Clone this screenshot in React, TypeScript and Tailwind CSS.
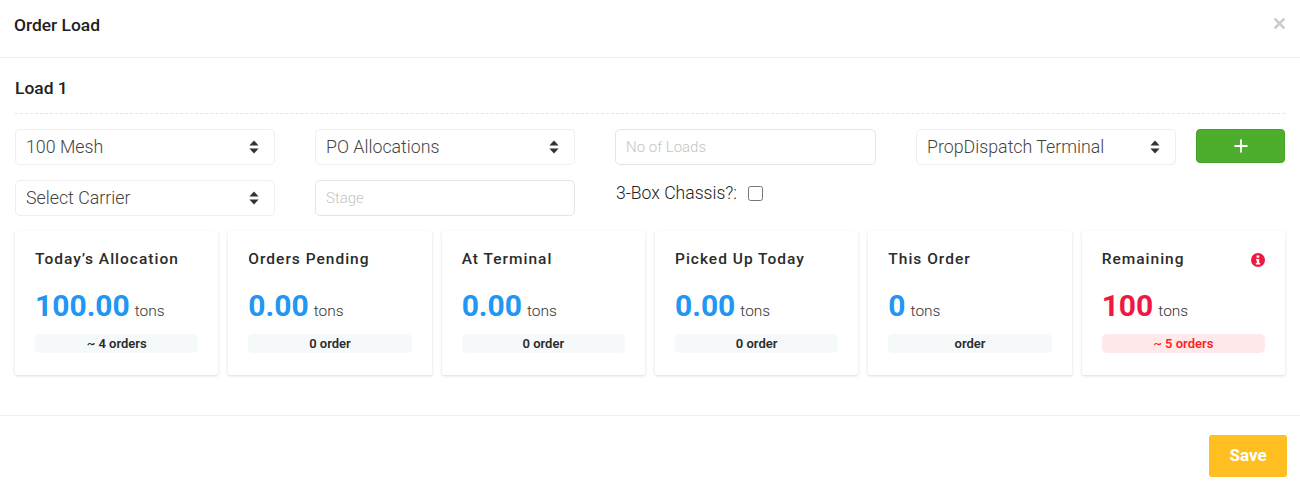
import React from 'react';

const stats = [
  { title: "Today’s Allocation", value: '100.00', note: '~ 4 orders' },
  { title: 'Orders Pending', value: '0.00', note: '0 order' },
  { title: 'At Terminal', value: '0.00', note: '0 order' },
  { title: 'Picked Up Today', value: '0.00', note: '0 order' },
  { title: 'This Order', value: '0', note: 'order' },
  { title: 'Remaining', value: '100', note: '~ 5 orders', danger: true },
];

const SelectBox = ({ value, className }: { value: string; className: string }) => (
  <div className={`relative h-[36px] ${className}`}>
    <select
      defaultValue={value}
      className="w-full h-full appearance-none bg-white border border-[#eeeeee] rounded-[5px] pl-[10px] pr-8 text-[17.8px] font-light text-[#444444] outline-none"
    >
      <option>{value}</option>
    </select>
    <svg viewBox="0 0 10 14" className="absolute right-[16px] top-[11px] w-[10px] h-[14px] fill-[#333333]">
      <path d="M5 0.5 L9.6 5.6 H0.4 Z" />
      <path d="M5 13.5 L0.4 8.4 H9.6 Z" />
    </svg>
  </div>
);

const TextBox = ({ placeholder, className }: { placeholder: string; className: string }) => (
  <input
    placeholder={placeholder}
    className={`h-[36px] bg-white border border-[#e4e4e4] rounded-[5px] px-[10px] text-[15px] font-light outline-none placeholder:text-[#c4c4c4] ${className}`}
  />
);

const App: React.FC = () => {
  return (
    <div className="w-[1300px] h-[487px] bg-white overflow-hidden font-['Roboto',sans-serif] text-[#212121]">
      {/* Header */}
      <header className="h-[58px] border-b border-[#eeeeee] pl-[14px] pr-[14px] flex justify-between">
        <h1 className="mt-[14px] text-[17.4px] leading-[22px] font-medium">Order Load</h1>
        <svg viewBox="0 0 12 12" className="mt-[17px] w-[13px] h-[13px] stroke-[#cccccc] fill-none" strokeWidth="2.6">
          <path d="M1.5 1.5 L10.5 10.5 M10.5 1.5 L1.5 10.5" />
        </svg>
      </header>

      <main className="h-[358px] border-b border-[#eeeeee] px-[15px]">
        <div className="h-[56px] border-b border-dashed border-[#e4e4e4] pt-[19px]">
          <h2 className="text-[17.4px] leading-[22px] font-medium">Load 1</h2>
        </div>

        {/* Fields */}
        <div className="mt-[15px] flex">
          <SelectBox value="100 Mesh" className="w-[260px]" />
          <SelectBox value="PO Allocations" className="w-[260px] ml-[40px]" />
          <TextBox placeholder="No of Loads" className="w-[261px] ml-[40px]" />
          <SelectBox value="PropDispatch Terminal" className="w-[260px] ml-[40px]" />
          <button className="w-[89px] h-[34px] ml-[20px] bg-[#4cae2c] border border-[#45a027] rounded-[4px] flex items-center justify-center">
            <svg viewBox="0 0 14 14" className="w-[14px] h-[14px] stroke-white fill-none" strokeWidth="2">
              <path d="M7 0.5 V13.5 M0.5 7 H13.5" />
            </svg>
          </button>
        </div>
        <div className="mt-[15px] flex">
          <SelectBox value="Select Carrier" className="w-[260px]" />
          <TextBox placeholder="Stage" className="w-[260px] ml-[40px]" />
          <label className="ml-[41px] h-[26px] flex items-center gap-[11px] text-[17.6px] font-light text-[#222222]">
            3-Box Chassis?:
            <input type="checkbox" className="w-[15px] h-[15px]" />
          </label>
        </div>

        {/* Stat cards */}
        <div className="mt-[15px] grid grid-cols-6 gap-[10px]">
          {stats.map((s) => (
            <div key={s.title} className="h-[144px] bg-white rounded-[2px] shadow-[0_1px_3px_rgba(0,0,0,0.15)] px-[20px] pt-[18px]">
              <div className="flex justify-between items-center h-[20px] mt-[1px]">
                <span className="text-[15.5px] font-medium tracking-[1px] text-[#2b2b2b]">{s.title}</span>
                {s.danger && (
                  <svg viewBox="0 0 14 14" className="w-[14px] h-[14px]">
                    <circle cx="7" cy="7" r="7" fill="#f01840" />
                    <path d="M5.6 2.6 h2.6 v2.1 h-2.6 Z M5 5.9 h3.2 v4 h1 v1.7 h-4.4 v-1.7 h1 v-2.3 h-0.8 Z" fill="#ffffff" />
                  </svg>
                )}
              </div>
              <div className="mt-[17px] h-[38px] flex items-baseline">
                <span className={`text-[30px] leading-[38px] font-bold ${s.danger ? 'text-[#f01840]' : 'text-[#2196f3]'}`}>{s.value}</span>
                <span className="ml-[5px] text-[15.5px] font-light text-[#333333]">tons</span>
              </div>
              <div className={`mt-[9px] h-[19px] rounded-[5px] text-center text-[13px] leading-[19px] font-semibold ${s.danger ? 'bg-[#ffe9ea] text-[#ff1f1f]' : 'bg-[#f6f9fa] text-[#2b2b2b]'}`}>
                {s.note}
              </div>
            </div>
          ))}
        </div>
      </main>

      {/* Footer */}
      <footer className="flex justify-end pr-[13px] pt-[19px]">
        <button className="w-[78px] h-[42px] bg-[#ffbf20] rounded-[3px] text-white text-[17px] font-bold">Save</button>
      </footer>
    </div>
  );
};

export default App;
